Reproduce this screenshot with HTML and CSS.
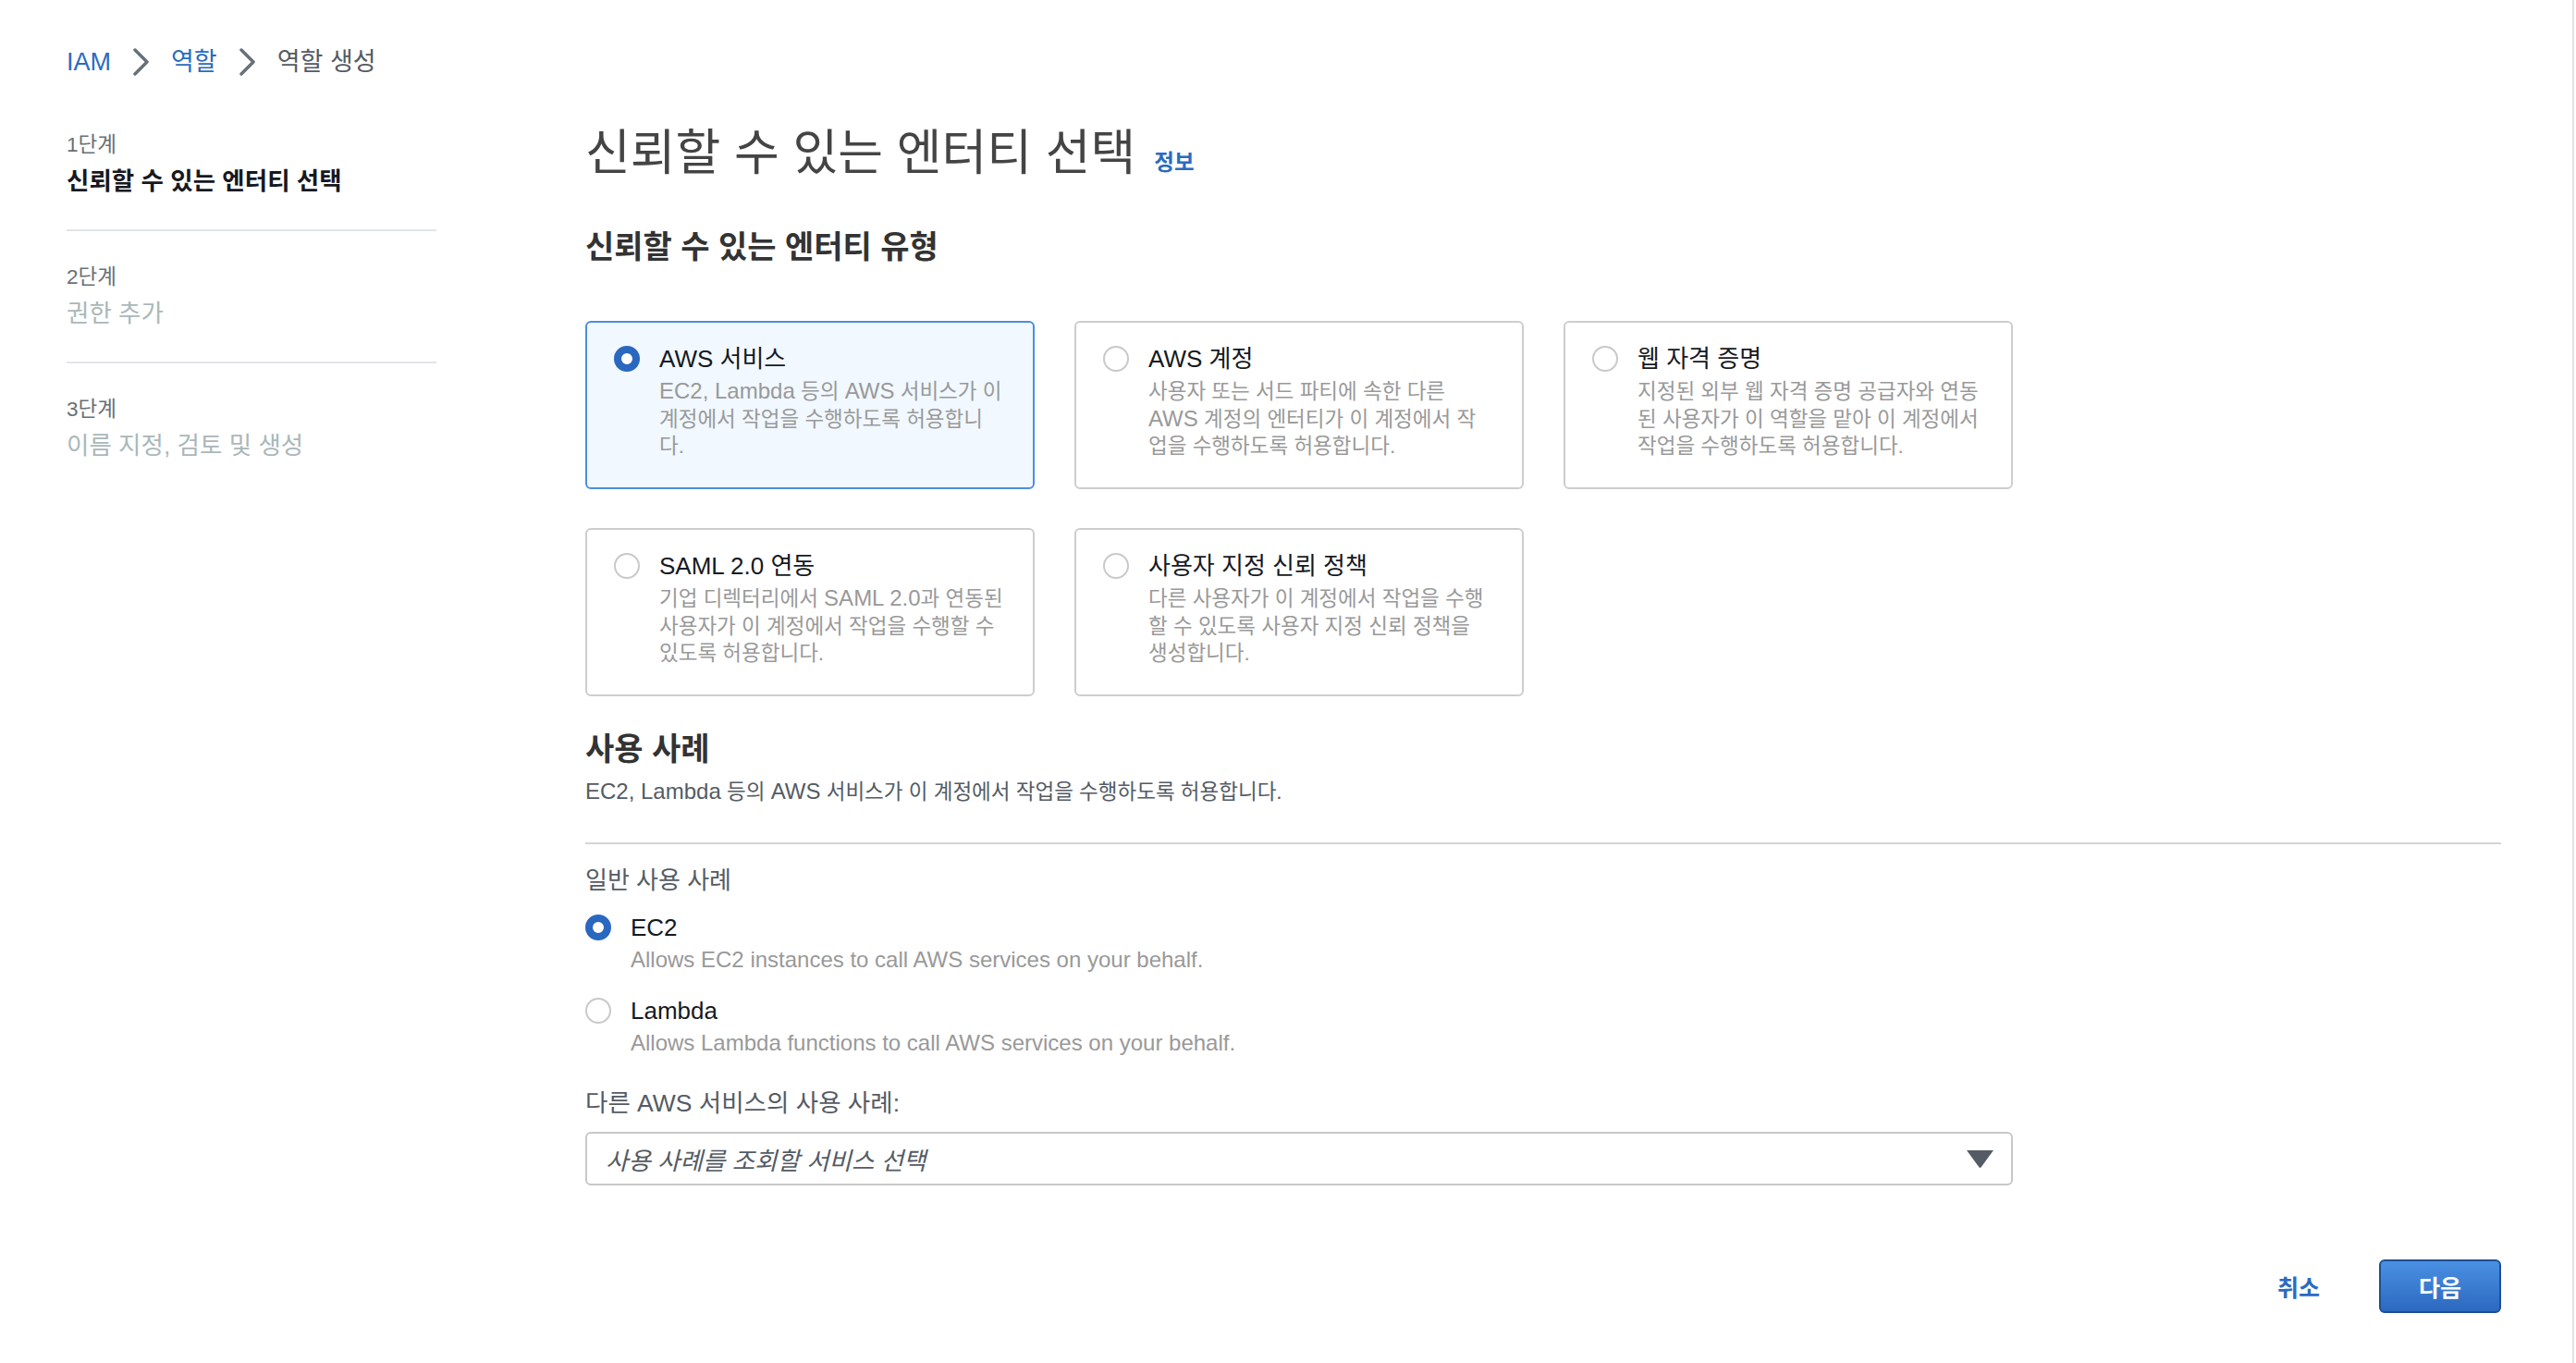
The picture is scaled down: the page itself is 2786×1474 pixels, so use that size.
FILE: index.html
```html
<!DOCTYPE html>
<html lang="ko">
<head>
<meta charset="utf-8">
<title>역할 생성</title>
<link rel="stylesheet" href="styles.css">
</head>
<body>
<div class="page">
  <nav class="breadcrumb">
    <a class="crumb-link" href="#">IAM</a>
    <svg class="chev" viewBox="0 0 18 30"><polyline points="2,2 15,15 2,28"/></svg>
    <a class="crumb-link" href="#">역할</a>
    <svg class="chev" viewBox="0 0 18 30"><polyline points="2,2 15,15 2,28"/></svg>
    <span class="crumb-current">역할 생성</span>
  </nav>

  <div class="layout">
    <aside class="steps">
      <div class="step">
        <div class="step-label">1단계</div>
        <div class="step-title active">신뢰할 수 있는 엔터티 선택</div>
      </div>
      <div class="step">
        <div class="step-label">2단계</div>
        <div class="step-title">권한 추가</div>
      </div>
      <div class="step">
        <div class="step-label">3단계</div>
        <div class="step-title">이름 지정, 검토 및 생성</div>
      </div>
    </aside>

    <main class="main">
      <div class="title-row">
        <h1>신뢰할 수 있는 엔터티 선택</h1>
        <a class="info" href="#">정보</a>
      </div>

      <h2 class="section-title">신뢰할 수 있는 엔터티 유형</h2>

      <div class="cards">
        <div class="card selected">
          <span class="radio checked"></span>
          <div class="card-text">
            <div class="card-title">AWS 서비스</div>
            <div class="card-desc"><span class="lat">EC2, Lambda</span> 등의 <span class="lat">AWS</span> 서비스가 이<br>계정에서 작업을 수행하도록 허용합니<br>다.</div>
          </div>
        </div>
        <div class="card">
          <span class="radio"></span>
          <div class="card-text">
            <div class="card-title">AWS 계정</div>
            <div class="card-desc">사용자 또는 서드 파티에 속한 다른<br><span class="lat">AWS</span> 계정의 엔터티가 이 계정에서 작<br>업을 수행하도록 허용합니다.</div>
          </div>
        </div>
        <div class="card">
          <span class="radio"></span>
          <div class="card-text">
            <div class="card-title">웹 자격 증명</div>
            <div class="card-desc">지정된 외부 웹 자격 증명 공급자와 연동<br>된 사용자가 이 역할을 맡아 이 계정에서<br>작업을 수행하도록 허용합니다.</div>
          </div>
        </div>
        <div class="card">
          <span class="radio"></span>
          <div class="card-text">
            <div class="card-title">SAML 2.0 연동</div>
            <div class="card-desc">기업 디렉터리에서 <span class="lat">SAML 2.0</span>과 연동된<br>사용자가 이 계정에서 작업을 수행할 수<br>있도록 허용합니다.</div>
          </div>
        </div>
        <div class="card">
          <span class="radio"></span>
          <div class="card-text">
            <div class="card-title">사용자 지정 신뢰 정책</div>
            <div class="card-desc">다른 사용자가 이 계정에서 작업을 수행<br>할 수 있도록 사용자 지정 신뢰 정책을<br>생성합니다.</div>
          </div>
        </div>
      </div>

      <h2 class="usecase-title">사용 사례</h2>
      <p class="usecase-desc"><span class="lat">EC2, Lambda</span> 등의 <span class="lat">AWS</span> 서비스가 이 계정에서 작업을 수행하도록 허용합니다.</p>
      <div class="divider"></div>

      <div class="group-label">일반 사용 사례</div>
      <div class="option">
        <span class="radio checked"></span>
        <div>
          <div class="option-label">EC2</div>
          <div class="option-desc">Allows EC2 instances to call AWS services on your behalf.</div>
        </div>
      </div>
      <div class="option">
        <span class="radio"></span>
        <div>
          <div class="option-label">Lambda</div>
          <div class="option-desc">Allows Lambda functions to call AWS services on your behalf.</div>
        </div>
      </div>

      <div class="select-label">다른 AWS 서비스의 사용 사례:</div>
      <div class="select">
        <span class="placeholder">사용 사례를 조회할 서비스 선택</span>
        <svg class="caret" viewBox="0 0 29 19"><path d="M0 0 H29 L15.6 18.2 Q14.5 19.4 13.4 18.2 Z"/></svg>
      </div>

      <div class="actions">
        <a class="cancel" href="#">취소</a>
        <button class="next" type="button">다음</button>
      </div>
    </main>
  </div>
</div>
</body>
</html>
```

FILE: styles.css
```css
* {
  box-sizing: border-box;
}

html,
body {
  margin: 0;
  padding: 0;
  background: #ffffff;
}

body {
  font-family: "Liberation Sans", "Noto Sans CJK KR", sans-serif;
  color: #16191f;
  font-feature-settings: "palt";
}

a {
  text-decoration: none;
}

.page {
  width: 2784px;
  min-height: 1474px;
  border-right: 2px solid #e3e3e3;
  padding: 50px 0 0 72px;
}

/* breadcrumb */
.breadcrumb {
  display: flex;
  align-items: center;
  height: 34px;
  font-size: 27px;
  line-height: 34px;
}

.crumb-link {
  color: #2a6bc0;
}

.crumb-current {
  color: #545b64;
}

.chev {
  width: 18px;
  height: 30px;
  margin: 0 23px 0 24px;
  fill: none;
  stroke: #687078;
  stroke-width: 3.5;
  stroke-linecap: round;
  stroke-linejoin: round;
}

.layout {
  display: flex;
  margin-top: 52px;
}

/* steps sidebar */
.steps {
  width: 400px;
  flex: none;
  padding-top: 6px;
}

.step {
  border-bottom: 2px solid #e1e4e8;
  padding-bottom: 35px;
}

.step + .step {
  padding-top: 35px;
}

.step:last-child {
  border-bottom: none;
}

.step-label {
  font-size: 22.5px;
  line-height: 30px;
  color: #687078;
}

.step-title {
  margin-top: 7px;
  font-size: 26.5px;
  line-height: 34px;
  color: #aab7b8;
}

.step-title.active {
  color: #16191f;
  font-weight: 700;
}

/* main column */
.main {
  margin-left: 161px;
  width: 2072px;
}

.title-row {
  display: flex;
  align-items: baseline;
  gap: 20px;
  height: 60px;
}

.title-row h1 {
  margin: 0;
  font-size: 53px;
  line-height: 60px;
  font-weight: 400;
  color: #444444;
}

.info {
  font-size: 23.5px;
  font-weight: 700;
  color: #2a6bc0;
}

.section-title {
  margin: 49px 0 0;
  font-size: 34px;
  line-height: 44px;
  font-weight: 700;
  color: #333333;
}

/* entity cards */
.cards {
  margin-top: 58px;
  display: grid;
  grid-template-columns: repeat(3, 486px);
  grid-auto-rows: 182px;
  column-gap: 43px;
  row-gap: 42px;
}

.card {
  display: flex;
  gap: 21px;
  border: 2px solid #cdcdcd;
  border-radius: 6px;
  padding: 18px 16px 0 29px;
  background: #ffffff;
}

.card.selected {
  border-color: #4a8ee0;
  background: #f1f8ff;
}

.radio {
  flex: none;
  width: 28px;
  height: 28px;
  border-radius: 50%;
  border: 2px solid #c9c9c9;
  background: #ffffff;
  margin-top: 7px;
}

.radio.checked {
  border: 8px solid #2a68bf;
}

.card-title {
  font-size: 26px;
  line-height: 42px;
  color: #16191f;
}

.card-desc {
  font-size: 22.5px;
  line-height: 29.5px;
  color: #999999;
  white-space: nowrap;
}

.lat {
  font-size: 24px;
  line-height: 20px;
}

/* use cases */
.usecase-title {
  margin: 35px 0 0;
  font-size: 34px;
  line-height: 44px;
  font-weight: 700;
  color: #333333;
}

.usecase-desc {
  margin: 10px 0 0;
  font-size: 22.5px;
  line-height: 30px;
  color: #545b64;
}

.divider {
  margin-top: 39px;
  height: 2px;
  background: #d5d5d5;
}

.group-label {
  margin-top: 24px;
  font-size: 26px;
  line-height: 30px;
  color: #545b64;
}

.option {
  display: flex;
  gap: 21px;
  margin-top: 19px;
}

.option + .option {
  margin-top: 23px;
}

.option .radio {
  margin-top: 3px;
}

.option-label {
  font-size: 26px;
  line-height: 34px;
  color: #16191f;
}

.option-desc {
  margin-top: 3px;
  font-size: 24px;
  line-height: 30px;
  color: #999999;
}

.select-label {
  margin-top: 35px;
  font-size: 26.5px;
  line-height: 30px;
  color: #545b64;
}

.select {
  margin-top: 16px;
  width: 1544px;
  height: 58px;
  border: 2px solid #c8c8c8;
  border-radius: 6px;
  display: flex;
  align-items: center;
  justify-content: space-between;
  padding: 0 19px 0 20px;
}

.placeholder {
  font-style: italic;
  font-size: 26.5px;
  color: #545b64;
}

.caret {
  width: 29px;
  height: 19px;
  fill: #545b64;
}

/* footer actions */
.actions {
  margin-top: 80px;
  display: flex;
  justify-content: flex-end;
  align-items: center;
  gap: 64px;
}

.cancel {
  font-size: 25px;
  font-weight: 700;
  color: #2a6bc0;
}

.next {
  width: 132px;
  height: 58px;
  border: 2px solid #1f4f8e;
  border-radius: 6px;
  background: linear-gradient(#4a90e3, #2b69bf);
  color: #ffffff;
  font-family: inherit;
  font-size: 25px;
  font-weight: 700;
  padding: 0;
}
```
